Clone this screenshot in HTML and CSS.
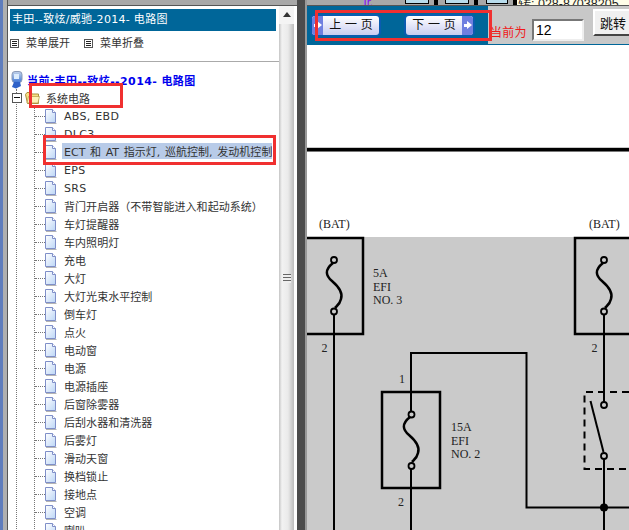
FILE: index.html
```html
<!DOCTYPE html>
<html lang="en">
<head>
    <meta charset="UTF-8">
    <meta name="viewport" content="width=device-width, initial-scale=1.0">
    <title>丰田--致炫/威驰-2014- 电路图</title>
    <link rel="stylesheet" href="styles.css">
</head>
<body>

    <svg class="defs" width="0" height="0">
        <defs>
            <linearGradient id="docFill" x1="0" y1="0" x2="1" y2="1">
                <stop offset="0" stop-color="#ffffff"/>
                <stop offset="1" stop-color="#bcd6f6"/>
            </linearGradient>
            <linearGradient id="pcFill" x1="0" y1="0" x2="0" y2="1">
                <stop offset="0" stop-color="#c4d4ea"/>
                <stop offset="1" stop-color="#3f78d8"/>
            </linearGradient>
            <symbol id="doc" viewBox="0 0 12 15">
                <path d="M1 14.5H11.5" stroke="#b4b4b4" stroke-width="1" fill="none"/>
                <path d="M0.5 0.5H7.5L10.5 3.5V13.5H0.5Z" fill="url(#docFill)" stroke="#7f8fc8"/>
                <path d="M7.5 0.5V3.5H10.5" fill="#fff" stroke="#7f8fc8"/>
            </symbol>
            <symbol id="list" viewBox="0 0 9 9">
                <rect x="0.5" y="0.5" width="8" height="8" fill="#fff" stroke="#555"/>
                <path d="M2 2.5H7M2 4.5H7M2 6.5H7" stroke="#222"/>
            </symbol>
        </defs>
    </svg>

    <div class="page">
        <div class="edge"></div>

        <!-- Left menu frame -->
        <div class="left-frame">
            <div class="top-strip"></div>
            <div class="left-body">
                <div class="menu">
                    <div class="menu-title">丰田--致炫/威驰-2014- 电路图</div>
                    <div class="menu-tools">
                        <span class="tool"><svg class="tool-icon"><use href="#list"/></svg>菜单展开</span>
                        <span class="tool"><svg class="tool-icon"><use href="#list"/></svg>菜单折叠</span>
                    </div>
                    <hr class="menu-rule">

                    <div class="current">
                        <svg class="pc-icon" viewBox="0 0 12 18">
                            <rect x="1" y="0.5" width="10" height="11" rx="3" fill="url(#pcFill)" stroke="#8a9ab8"/>
                            <rect x="3" y="3" width="5" height="5" fill="#dcecfd"/>
                            <path d="M3 11L1 16L5 17.500L10 15L9 11Z" fill="#2f62c8"/>
                        </svg>
                        <span>当前:丰田--致炫--2014- 电路图</span>
                    </div>

                    <div class="tree">
                        <div class="root-row">
                            <span class="expander"></span>
                            <svg class="folder-icon" viewBox="0 0 15 12">
                                <path d="M0.5 2.5L2 0.5H6L7 2H13.5V11.5H2.5Z" fill="#f6df86" stroke="#a98f3a"/>
                                <path d="M2 11L3.5 4.5H14.5L13 11Z" fill="#fdf2b8" stroke="#b39a45" stroke-width="0.7"/>
                            </svg>
                            <span class="root-label">系统电路</span>
                        </div>
                        <div class="leaves">
                            <div class="leaf latin"><svg class="doc-icon"><use href="#doc"/></svg><span>ABS, EBD</span></div>
                            <div class="leaf latin"><svg class="doc-icon"><use href="#doc"/></svg><span>DLC3</span></div>
                            <div class="leaf selected"><svg class="doc-icon"><use href="#doc"/></svg><span>ECT 和 AT 指示灯, 巡航控制, 发动机控制</span></div>
                            <div class="leaf latin"><svg class="doc-icon"><use href="#doc"/></svg><span>EPS</span></div>
                            <div class="leaf latin"><svg class="doc-icon"><use href="#doc"/></svg><span>SRS</span></div>
                            <div class="leaf"><svg class="doc-icon"><use href="#doc"/></svg><span>背门开启器（不带智能进入和起动系统）</span></div>
                            <div class="leaf"><svg class="doc-icon"><use href="#doc"/></svg><span>车灯提醒器</span></div>
                            <div class="leaf"><svg class="doc-icon"><use href="#doc"/></svg><span>车内照明灯</span></div>
                            <div class="leaf"><svg class="doc-icon"><use href="#doc"/></svg><span>充电</span></div>
                            <div class="leaf"><svg class="doc-icon"><use href="#doc"/></svg><span>大灯</span></div>
                            <div class="leaf"><svg class="doc-icon"><use href="#doc"/></svg><span>大灯光束水平控制</span></div>
                            <div class="leaf"><svg class="doc-icon"><use href="#doc"/></svg><span>倒车灯</span></div>
                            <div class="leaf"><svg class="doc-icon"><use href="#doc"/></svg><span>点火</span></div>
                            <div class="leaf"><svg class="doc-icon"><use href="#doc"/></svg><span>电动窗</span></div>
                            <div class="leaf"><svg class="doc-icon"><use href="#doc"/></svg><span>电源</span></div>
                            <div class="leaf"><svg class="doc-icon"><use href="#doc"/></svg><span>电源插座</span></div>
                            <div class="leaf"><svg class="doc-icon"><use href="#doc"/></svg><span>后窗除雾器</span></div>
                            <div class="leaf"><svg class="doc-icon"><use href="#doc"/></svg><span>后刮水器和清洗器</span></div>
                            <div class="leaf"><svg class="doc-icon"><use href="#doc"/></svg><span>后雾灯</span></div>
                            <div class="leaf"><svg class="doc-icon"><use href="#doc"/></svg><span>滑动天窗</span></div>
                            <div class="leaf"><svg class="doc-icon"><use href="#doc"/></svg><span>换档锁止</span></div>
                            <div class="leaf"><svg class="doc-icon"><use href="#doc"/></svg><span>接地点</span></div>
                            <div class="leaf"><svg class="doc-icon"><use href="#doc"/></svg><span>空调</span></div>
                            <div class="leaf"><svg class="doc-icon"><use href="#doc"/></svg><span>喇叭</span></div>
                        </div>
                    </div>
                </div>

                <div class="scrollbar">
                    <div class="scroll-up"></div>
                    <div class="scroll-thumb">
                        <div class="grip"></div>
                    </div>
                </div>
            </div>
        </div>

        <div class="splitter"></div>

        <!-- Right diagram frame -->
        <div class="right-frame">
            <div class="top-strip right-strip">
                <span class="strip-mark">Tr.</span>
                <span class="strip-box"></span>
                <span class="strip-black"></span>
                <span class="strip-box"></span>
                <span class="strip-black"></span>
                <span class="strip-box short"></span>
                <span class="strip-black"></span>
                <span class="strip-phone">转: 028-87038205</span>
            </div>

            <div class="pager">
                <div class="pager-nav">
                    <a class="page-btn prev" href="#"><span class="arrow"></span><span class="page-label">上 一 页</span></a>
                    <a class="page-btn next" href="#"><span class="page-label">下 一 页</span><span class="arrow"></span></a>
                </div>
                <div class="pager-jump">
                    <span class="current-label">当前为</span>
                    <input class="page-input" type="text" value="12">
                    <button class="jump-btn">跳转</button>
                </div>
            </div>

            <svg class="diagram" viewBox="307 45 322 485" width="322" height="485">
                <rect x="307" y="45" width="322" height="485" fill="#fff"/>
                <rect x="307" y="237" width="322" height="293" fill="#cacaca"/>
                <rect x="307" y="147" width="322" height="5" fill="#c8c8c8"/>
                <rect x="307" y="148" width="322" height="3.4" fill="#000"/>

                <g class="wires">
                    <path class="thick" d="M307 238H363V334H307"/>
                    <path class="thick" d="M629 238H575V334H629"/>
                    <path class="thick" d="M382 392H440V488H382Z"/>
                    <path d="M334 314V530"/>
                    <path d="M604 314V402M604 459V530"/>
                    <path d="M411 411V353H526.500V507.500H629"/>
                    <path d="M411 469V530"/>
                    <path class="dashed" d="M629 392H584.500V469H629"/>
                    <path class="lever" d="M590.500 401L603.500 452"/>
                    <path class="fuse" d="M333 263C324 270 326 276 332 281C339 287 343 293 341 299C340 304 337 306 335 308"/>
                    <path class="fuse" d="M603 263C594 270 596 276 602 281C609 287 613 293 611 299C610 304 607 306 605 308"/>
                    <path class="fuse" d="M410 417C401 424 403 430 409 435C416 441 420 447 418 453C417 458 414 460 412 462"/>
                </g>
                <g class="terminals">
                    <circle cx="334" cy="260" r="3"/>
                    <circle cx="334" cy="311.500" r="3"/>
                    <circle cx="604" cy="260" r="3"/>
                    <circle cx="604" cy="311.500" r="3"/>
                    <circle cx="411.500" cy="414.500" r="3"/>
                    <circle cx="411.500" cy="466" r="3"/>
                    <circle cx="604" cy="405" r="3"/>
                    <circle cx="604" cy="456" r="3"/>
                </g>
                <circle cx="604" cy="507.500" r="4" fill="#000"/>

                <g class="labels">
                    <text x="319" y="228">(BAT)</text>
                    <text x="589" y="228">(BAT)</text>
                    <text x="373" y="277">5A</text>
                    <text x="373" y="290.500">EFI</text>
                    <text x="373" y="304">NO. 3</text>
                    <text x="321.500" y="352">2</text>
                    <text x="591.500" y="352">2</text>
                    <text x="399" y="383">1</text>
                    <text x="398" y="506">2</text>
                    <text x="451" y="431">15A</text>
                    <text x="451" y="444.500">EFI</text>
                    <text x="451" y="458">NO. 2</text>
                </g>
            </svg>
        </div>
    </div>

    <!-- Red marks drawn over the screenshot -->
    <div class="mark mark-root"></div>
    <div class="mark mark-item"></div>
    <div class="mark mark-nav"></div>

</body>
</html>
```

FILE: styles.css
```css
* { box-sizing: border-box; }
html, body { margin: 0; padding: 0; }
body { width: 629px; height: 530px; overflow: hidden; position: relative; background: #a8a8a8; font-family: "DejaVu Sans", "Noto Sans CJK SC", sans-serif; font-size: 11px; color: #333; }
.defs { position: absolute; }
.page { display: flex; height: 530px; }

/* Window edge */
.edge { width: 8px; flex-shrink: 0; background: #b0b0b0; border-left: 3px solid #5f7dbd; border-right: 1px solid #555; }

/* Top strip */
.top-strip { height: 6px; background: #a8a8a8; border-bottom: 1px solid #555; flex-shrink: 0; }

/* Left frame */
.left-frame { width: 289px; flex-shrink: 0; display: flex; flex-direction: column; }
.left-body { flex-grow: 1; display: flex; background: #fff; min-height: 0; }
.menu { width: 271px; flex-shrink: 0; overflow: hidden; }
.menu-title { height: 22px; margin: 3px 3px 0 2px; padding-left: 2px; background: #006699; color: #fff; font-size: 11px; letter-spacing: 0.3px; line-height: 21px; white-space: nowrap; }
.menu-tools { display: flex; gap: 14px; padding: 4px 0 0 2px; height: 26px; line-height: 17px; }
.tool { display: flex; align-items: center; height: 17px; }
.tool-icon { width: 9px; height: 9px; margin-right: 7px; }
.menu-rule { border: none; border-top: 1px solid #aaa; margin: 4px 0 0 0; height: 0; }

.current { display: flex; align-items: center; height: 18px; margin-top: 9px; padding-left: 3px; color: #0000ee; font-weight: bold; letter-spacing: 0.4px; white-space: nowrap; }
.pc-icon { width: 12px; height: 18px; margin-right: 4px; }

.tree { margin-left: 8px; border-left: 1px dotted #777; height: 460px; }
.root-row { display: flex; align-items: center; height: 18px; margin-left: -5px; position: relative; }
.expander { width: 10px; height: 10px; border: 1px solid #555; background: #fff; position: relative; flex-shrink: 0; }
.expander::after { content: ""; position: absolute; left: 1px; right: 1px; top: 3px; border-top: 1px solid #111; }
.folder-icon { width: 15px; height: 12px; margin-left: 3px; }
.root-label { margin-left: 6px; }

.leaves { margin-left: 17px; border-left: 1px dotted #777; }
.leaf { display: flex; align-items: center; height: 18px; white-space: nowrap; }
.leaf::before { content: ""; width: 10px; border-top: 1px dotted #777; flex-shrink: 0; }
.doc-icon { width: 12px; height: 15px; flex-shrink: 0; margin-right: 7px; }
.leaf span { letter-spacing: 0.05px; }
.latin span { letter-spacing: 0.3px; word-spacing: 1px; }
.selected span { background: #b8cbe8; padding: 3px 0 0 2px; margin: -2px 0 0 -2px; width: 210px; height: 16px; line-height: 13px; word-spacing: 1px; overflow: hidden; }

/* Menu scrollbar */
.scrollbar { width: 18px; flex-shrink: 0; display: flex; flex-direction: column; background: #fff; padding-right: 3px; }
.scroll-up { height: 18px; position: relative; background: #f4f4f4; }
.scroll-up::after { content: ""; position: absolute; left: 4px; top: 6px; border-left: 4px solid transparent; border-right: 4px solid transparent; border-bottom: 5px solid #333; }
.scroll-thumb { flex-grow: 1; background: linear-gradient(to right, #c4c4c4 0, #f2f2f2 20%, #eaeaea 60%, #bdbdbd 100%); display: flex; align-items: center; justify-content: center; padding-top: 2px; }
.grip { width: 8px; height: 9px; background: repeating-linear-gradient(to bottom, #666 0, #666 1px, #eee 1px, #eee 3px); }

.splitter { width: 10px; flex-shrink: 0; background: #4c4c4c; border-right: 2px solid #999; }

/* Right frame */
.right-frame { width: 322px; flex-shrink: 0; display: flex; flex-direction: column; overflow: hidden; }
.right-strip { display: flex; overflow: hidden; padding-left: 55px; }
.strip-mark { color: #8000ff; font-size: 10px; line-height: 6px; width: 36px; }
.strip-box { width: 24px; height: 4px; margin-left: 7px; background: #b8dcec; border: 1px solid #000; border-top: none; }
.strip-black { width: 4px; background: #000; margin-left: 5px; }
.strip-box.short { width: 22px; margin-left: 8px; }
.strip-phone { flex-grow: 1; background: #fffde8; color: #222; font-family: "Liberation Sans", sans-serif; font-size: 12.500px; line-height: 8px; white-space: nowrap; padding-left: 1px; }

.pager { display: flex; height: 39px; flex-shrink: 0; border-bottom: 1px solid #006699; }
.pager-nav { width: 181px; flex-shrink: 0; background: #006699; display: flex; align-items: flex-start; padding: 10px 0 0 5px; gap: 27px; }
.page-btn { display: flex; width: 67px; height: 19px; border-radius: 3px; background: linear-gradient(to bottom, #ffffff, #c9cdf2); box-shadow: 0 0 0 2px #0a5cb0; color: #111; text-decoration: none; font-size: 12px; line-height: 18px; }
.page-label { flex-grow: 1; text-align: center; white-space: nowrap; }
.arrow { width: 11px; background: #6f7fe0; position: relative; flex-shrink: 0; }
.arrow::before { content: ""; position: absolute; left: 2px; top: 8px; width: 3px; height: 3px; background: #fff; }
.arrow::after { content: ""; position: absolute; left: 5px; top: 5px; border-top: 4px solid transparent; border-bottom: 4px solid transparent; border-left: 5px solid #fff; }
.prev .arrow { border-radius: 3px 0 0 3px; }
.next .arrow { border-radius: 0 3px 3px 0; }

.pager-jump { flex-grow: 1; background: #c8c8c8; display: flex; align-items: flex-start; overflow: hidden; padding-left: 2px; }
.current-label { color: #f01818; font-size: 12px; letter-spacing: 0.3px; margin: 19px 5px 0 0; line-height: 17px; white-space: nowrap; }
.page-input { width: 52px; height: 22px; margin: 13px 9px 0 0; padding: 0 2px; border: 2px solid; border-color: #777 #eee #eee #777; background: #fff; font-family: "Liberation Sans", sans-serif; font-size: 14px; color: #000; flex-shrink: 0; }
.jump-btn { width: 50px; height: 27px; margin: 3px 0 0 0; padding: 0 0 0 5px; text-align: left; border: 2px solid; border-color: #fff #444 #444 #fff; background: #f0f0f0; font-family: "DejaVu Sans", "Noto Sans CJK SC", sans-serif; font-size: 13px; color: #111; flex-shrink: 0; }

/* Diagram */
.diagram { display: block; flex-shrink: 0; }
.wires path { fill: none; stroke: #000; stroke-width: 2; }
.wires .thick { stroke-width: 2.500; }
.wires .dashed { stroke-width: 2; stroke-dasharray: 7 5; }
.wires .lever { stroke-width: 2; }
.wires .fuse { stroke-width: 2.500; }
.terminals circle { fill: #cacaca; stroke: #000; stroke-width: 1.800; }
.labels text { font-family: "Liberation Serif", serif; font-size: 12px; fill: #222; }

/* Red marks */
.mark { position: absolute; border: 3px solid #f03030; }
.mark-root { left: 29px; top: 83px; width: 94px; height: 25px; }
.mark-item { left: 43px; top: 135px; width: 233px; height: 30px; }
.mark-nav { left: 315px; top: 10px; width: 177px; height: 31px; }
```
